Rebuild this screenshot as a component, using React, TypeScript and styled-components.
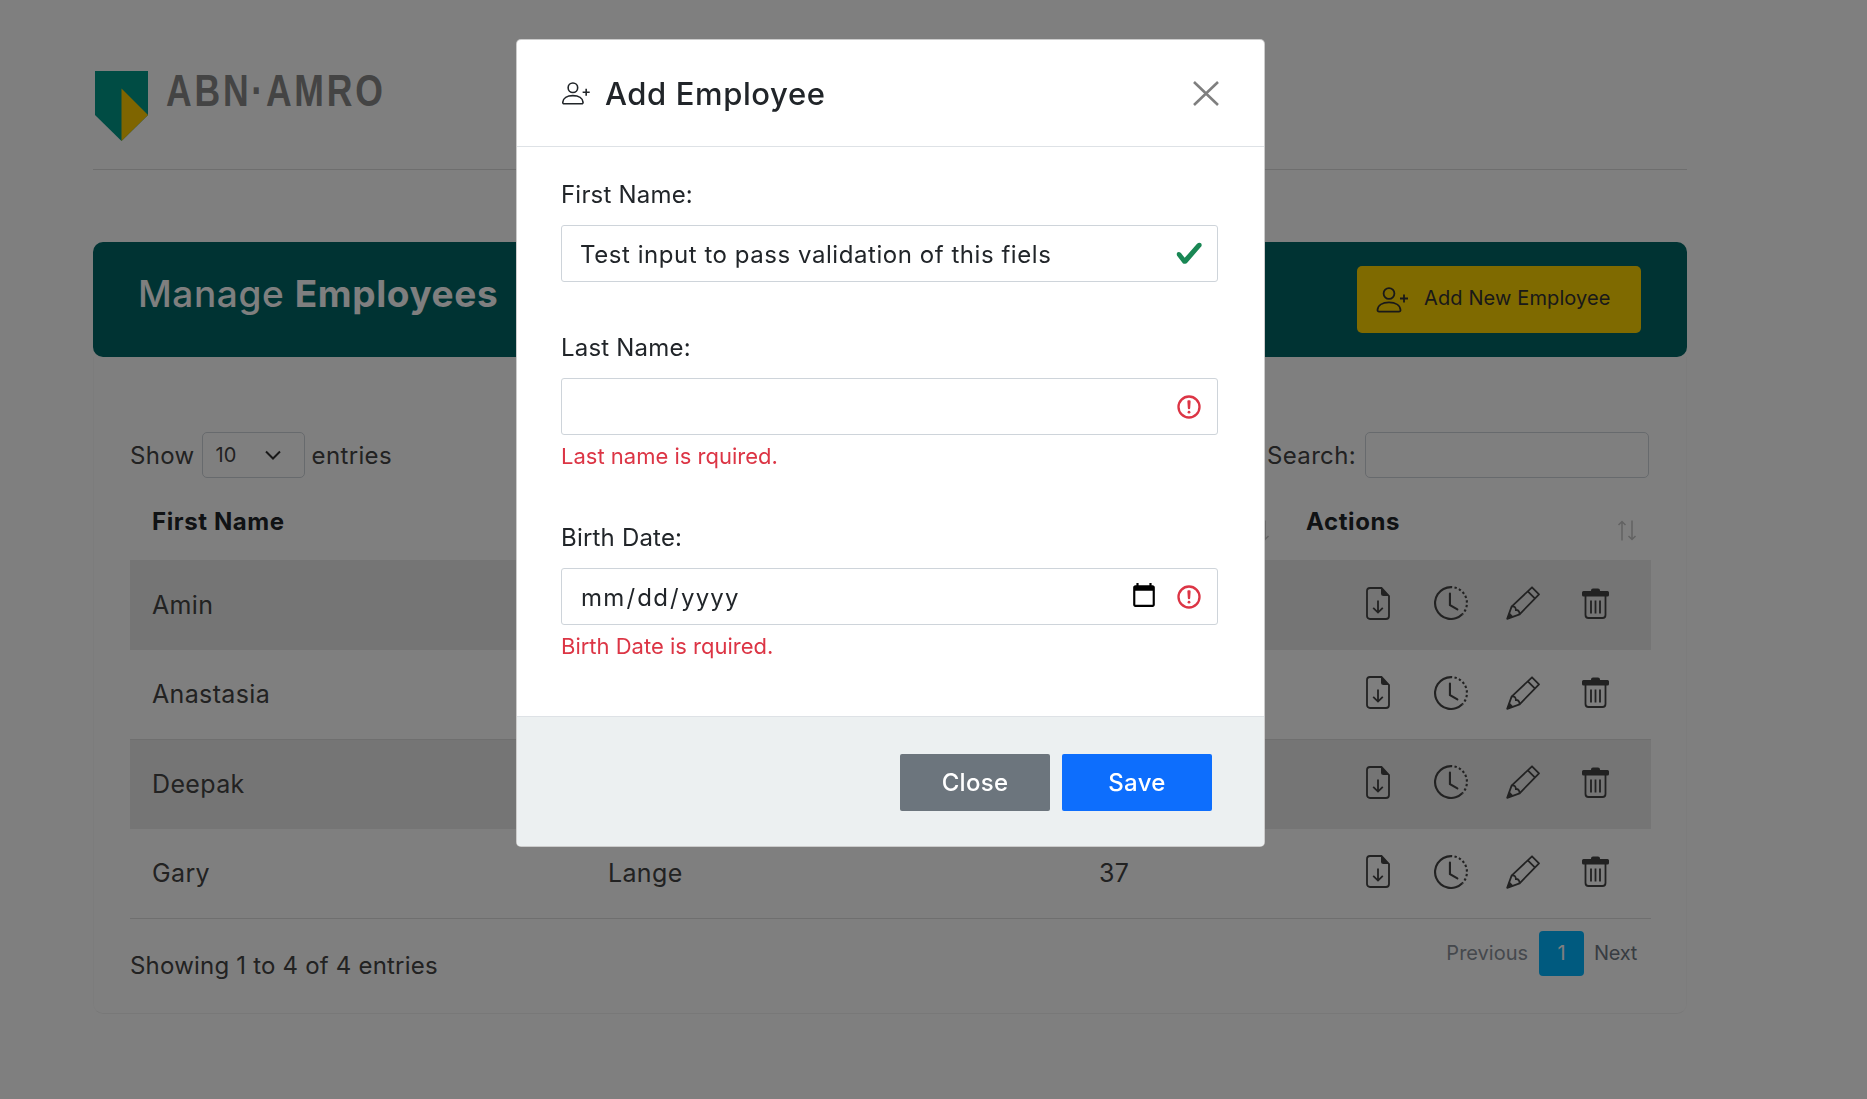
import React from "react";
import styled, { createGlobalStyle } from "styled-components";
import { BsClockHistory } from "react-icons/bs";

const GlobalStyle = createGlobalStyle`
  html, body {
    margin: 0;
    padding: 0;
    background: #fff;
  }
  body {
    font-family: Inter, "Open Sans", sans-serif;
    color: #212529;
  }
  * {
    box-sizing: border-box;
  }
`;

const PersonAddIcon: React.FC<{ width: number; height: number }> = ({ width, height }) => (
  <svg width={width} height={height} viewBox="0 0 33 26" fill="none" stroke="currentColor" strokeWidth="1.8">
    <circle cx="13" cy="6.5" r="5.4" />
    <path d="M3 24.6h20a1.5 1.5 0 0 0 1.5-1.6c-.3-4.800-5-7.600-11.500-7.600S1.800 18.200 1.500 23A1.500 1.500 0 0 0 3 24.600z" />
    <path d="M28 7.500v8M24 11.500h8" />
  </svg>
);

const FileDownIcon = () => (
  <svg width="24" height="33" viewBox="0 0 24 33" fill="none" stroke="currentColor" strokeWidth="1.8">
    <path d="M4 1h11.500L23 9v20a3 3 0 0 1-3 3H4a3 3 0 0 1-3-3V4a3 3 0 0 1 3-3z" />
    <path d="M15 1l8 8h-5.500A2.500 2.500 0 0 1 15 6.500z" fill="currentColor" stroke="none" />
    <path d="M12 13.500v12M7.200 20.800l4.800 4.800 4.800-4.800" />
  </svg>
);

const PencilIcon = () => (
  <svg width="34" height="34" viewBox="0 0 34 34" fill="none" stroke="currentColor" strokeWidth="1.8">
    <path d="M1.200 32.800L5.600 20.600 26 1.300l7 7L13.600 28.300z" strokeLinejoin="round" />
    <path d="M21.800 5.400l7 7" />
    <path d="M5.600 20.600c3-.6 4.200 1 4.300 3.400 2.400-.2 3.800 1.600 3.700 4.300" />
    <path d="M1.200 32.800l2-6.500 4.300 4.400z" fill="currentColor" stroke="none" />
  </svg>
);

const TrashIcon = () => (
  <svg width="27" height="31" viewBox="0 0 27 31" fill="none" stroke="currentColor" strokeWidth="1.800">
    <path d="M9 2.500a2 2 0 0 1 2-2h5a2 2 0 0 1 2 2V3h7.500a1.500 1.500 0 0 1 1.500 1.500v2.500a1.500 1.500 0 0 1-1.500 1.500h-24A1.500 1.500 0 0 1 0 7V4.500A1.500 1.500 0 0 1 1.500 3H9z" fill="currentColor" stroke="none" />
    <path d="M3.500 8v19a3 3 0 0 0 3 3h14a3 3 0 0 0 3-3V8" />
    <path d="M9 12.500v13M13.500 12.500v13M18 12.500v13" />
  </svg>
);

const InvalidIcon = () => (
  <svg width="28" height="28" viewBox="0 0 12 12" fill="none" stroke="#dc3545">
    <circle cx="6" cy="6" r="4.500" />
    <path strokeLinejoin="round" d="M5.800 3.600h.4L6 6.500z" />
    <circle cx="6" cy="8.200" r=".6" fill="#dc3545" stroke="none" />
  </svg>
);

const ValidIcon = () => (
  <svg width="28" height="28" viewBox="0 0 8 8">
    <path fill="#198754" d="M2.300 6.730L.6 4.530c-.4-1.040.46-1.400 1.100-.8l1.060 1.370L6.300 1.100c.6-.63 1.600-.27 1.250.7l-4 4.600c-.43.5-.8.4-1.250.33z" />
  </svg>
);

const SortArrows = () => (
  <svg width="20" height="21" viewBox="0 0 20 21" fill="none" stroke="currentColor" strokeWidth="1.500">
    <path d="M5 20.500V1.500M1.500 5L5 1.500 8.500 5" />
    <path d="M15 .5v19M11.500 16l3.500 3.500 3.500-3.500" />
  </svg>
);

const CloseIcon = () => (
  <svg width="26" height="25" viewBox="0 0 26 25" fill="none" stroke="currentColor" strokeWidth="2.600">
    <path d="M1 1l24 23M25 1L1 24" />
  </svg>
);

const ChevronIcon = () => (
  <svg width="18" height="10" viewBox="0 0 18 10" fill="none" stroke="currentColor" strokeWidth="2">
    <path d="M2 1.500l7 7 7-7" />
  </svg>
);

const App: React.FC = () => {
  const rows = [
    { first: "Amin", last: "", age: "" },
    { first: "Anastasia", last: "", age: "" },
    { first: "Deepak", last: "", age: "" },
    { first: "Gary", last: "Lange", age: "37" },
  ];

  return (
    <>
      <GlobalStyle />
      <Page>
        <TopBar>
          <svg width="53" height="70" viewBox="0 0 53 70">
            <path d="M0 0H53V44L26.500 70 0 44z" fill="#009888" />
            <path d="M26.500 17.500L53 44 26.500 70z" fill="#ffca00" />
          </svg>
          <LogoText>ABN·AMRO</LogoText>
        </TopBar>

        <Banner>
          <BannerTitle>
            Manage <b>Employees</b>
          </BannerTitle>
          <AddButton type="button">
            <PersonAddIcon width={33} height={26} />
            <AddLabel>Add New Employee</AddLabel>
          </AddButton>
        </Banner>

        <Panel>
          <Controls>
            <ControlGroup>
              Show
              <SelectWrap>
                <EntriesSelect defaultValue="10">
                  <option>10</option>
                  <option>25</option>
                  <option>50</option>
                </EntriesSelect>
                <SelectChevron>
                  <ChevronIcon />
                </SelectChevron>
              </SelectWrap>
              entries
            </ControlGroup>
            <ControlGroup>
              Search:
              <SearchInput type="text" />
            </ControlGroup>
          </Controls>

          <Table>
            <colgroup>
              <col style={{ width: 456 }} />
              <col style={{ width: 491 }} />
              <col style={{ width: 207 }} />
              <col style={{ width: 367 }} />
            </colgroup>
            <thead>
              <tr>
                <HeadCell>First Name</HeadCell>
                <HeadCell>Last Name</HeadCell>
                <HeadCell>
                  Age
                  <SortMark>
                    <SortArrows />
                  </SortMark>
                </HeadCell>
                <HeadCell>
                  Actions
                  <SortMark>
                    <SortArrows />
                  </SortMark>
                </HeadCell>
              </tr>
            </thead>
            <tbody>
              {rows.map((row, i) => (
                <Row key={row.first} striped={i % 2 === 0}>
                  <Cell>{row.first}</Cell>
                  <Cell>{row.last}</Cell>
                  <Cell>{row.age}</Cell>
                  <Cell>
                    <Actions>
                      <ActionSlot><FileDownIcon /></ActionSlot>
                      <ActionSlot><BsClockHistory size={34} /></ActionSlot>
                      <ActionSlot><PencilIcon /></ActionSlot>
                      <ActionSlot><TrashIcon /></ActionSlot>
                    </Actions>
                  </Cell>
                </Row>
              ))}
            </tbody>
          </Table>

          <TableFooter>
            <Showing>Showing 1 to 4 of 4 entries</Showing>
            <Pagination>
              <PageLink muted>Previous</PageLink>
              <CurrentPage>1</CurrentPage>
              <NextLink>Next</NextLink>
            </Pagination>
          </TableFooter>
        </Panel>
      </Page>

      <Overlay>
        <Modal>
          <ModalHeader>
            <ModalTitle>
              <PersonAddIcon width={30} height={23} />
              Add Employee
            </ModalTitle>
            <CloseButton type="button" aria-label="Close">
              <CloseIcon />
            </CloseButton>
          </ModalHeader>

          <ModalBody>
            <Field>
              <Label>First Name:</Label>
              <InputWrap>
                <TextInput type="text" defaultValue="Test input to pass validation of this fiels" />
                <FeedbackIcon><ValidIcon /></FeedbackIcon>
              </InputWrap>
            </Field>
            <Field>
              <Label>Last Name:</Label>
              <InputWrap>
                <TextInput type="text" />
                <FeedbackIcon><InvalidIcon /></FeedbackIcon>
              </InputWrap>
              <ErrorText>Last name is rquired.</ErrorText>
            </Field>
            <Field>
              <Label>Birth Date:</Label>
              <InputWrap>
                <DateInput type="date" />
                <FeedbackIcon><InvalidIcon /></FeedbackIcon>
              </InputWrap>
              <ErrorText>Birth Date is rquired.</ErrorText>
            </Field>
          </ModalBody>

          <ModalFooter>
            <FooterButton type="button" tone="#6c757d">Close</FooterButton>
            <FooterButton type="button" tone="#0d6efd">Save</FooterButton>
          </ModalFooter>
        </Modal>
      </Overlay>
    </>
  );
};

const Page = styled.div`
  width: 1867px;
  height: 1099px;
  padding: 71px 180px 0 93px;
  overflow: hidden;
`;

const TopBar = styled.header`
  display: flex;
  align-items: flex-start;
  gap: 18px;
  height: 99px;
  padding-left: 2px;
  border-bottom: 1px solid #ddd;
`;

const LogoText = styled.span`
  display: inline-block;
  transform: scaleX(0.79);
  transform-origin: left center;
  font-family: "Liberation Sans", sans-serif;
  font-weight: 700;
  font-size: 45px;
  line-height: 40px;
  letter-spacing: 3.5px;
  color: #888;
`;

const Banner = styled.section`
  display: flex;
  align-items: center;
  justify-content: space-between;
  height: 115px;
  margin-top: 72px;
  padding: 0 46px 0 45px;
  background: #006666;
  border-radius: 10px;
`;

const BannerTitle = styled.h2`
  margin: 0 0 12px;
  font-size: 37px;
  font-weight: 500;
  letter-spacing: 0.6px;
  color: #fff;

  b {
    font-weight: 700;
  }
`;

const AddButton = styled.button`
  display: flex;
  align-items: center;
  gap: 15px;
  width: 284px;
  height: 67px;
  padding: 0 0 0 19px;
  border: 0;
  border-radius: 5px;
  background: #ffd400;
  color: #333;
  font: 400 20px Inter, sans-serif;
  letter-spacing: 0.12px;
  white-space: nowrap;
`;

const AddLabel = styled.span`
  margin-bottom: 3px;
`;

const Panel = styled.section`
  height: 657px;
  padding: 75px 35px 0 36px;
  border: 1px solid rgba(0, 0, 0, 0.025);
  border-top: 0;
  border-bottom-color: rgba(0, 0, 0, 0.06);
  border-radius: 0 0 10px 10px;
`;

const Controls = styled.div`
  display: flex;
  align-items: center;
  justify-content: space-between;
  height: 46px;
  padding-right: 2px;
`;

const ControlGroup = styled.label`
  display: flex;
  align-items: center;
  gap: 7px;
  font-size: 24px;
  letter-spacing: 0.35px;
  color: #444;
`;

const SelectWrap = styled.span`
  position: relative;
  display: block;
  width: 103px;
  height: 46px;
`;

const EntriesSelect = styled.select`
  width: 100%;
  height: 100%;
  padding: 0 0 0 13px;
  appearance: none;
  background: transparent;
  border: 1px solid #ced4da;
  border-radius: 5px;
  color: #444;
  font: 400 20px Inter, sans-serif;
`;

const SelectChevron = styled.span`
  position: absolute;
  top: 18px;
  right: 23px;
  display: flex;
  color: #333;
  pointer-events: none;
`;

const SearchInput = styled.input`
  width: 284px;
  height: 46px;
  margin-left: 2px;
  border: 1px solid #ced4da;
  border-radius: 5px;
  background: transparent;
`;

const Table = styled.table`
  width: 100%;
  table-layout: fixed;
  border-collapse: collapse;
`;

const HeadCell = styled.th`
  position: relative;
  height: 82px;
  padding: 4px 0 0 22px;
  text-align: left;
  font-size: 24px;
  font-weight: 700;
  letter-spacing: 0.6px;
  color: #212529;
`;

const SortMark = styled.span`
  position: absolute;
  right: 14px;
  top: 40px;
  color: #c4c4c4;
`;

const Row = styled.tr<{ striped: boolean }>`
  height: 89.5px;
  background: ${(props) => (props.striped ? "#ebebeb" : "transparent")};
  border-bottom: 1px solid ${(props) => (props.striped ? "transparent" : "#dedede")};
`;

const Cell = styled.td`
  padding: 0 0 0 22px;
  font-size: 25px;
  letter-spacing: 0.35px;
  color: #444;
`;

const Actions = styled.div`
  display: flex;
  align-items: center;
  margin: 0 0 3px 36px;
  color: #444;
`;

const ActionSlot = styled.span`
  display: flex;
  align-items: center;
  justify-content: center;
  width: 72.5px;
`;

const TableFooter = styled.div`
  display: flex;
  justify-content: space-between;
  align-items: flex-start;
  margin-top: 12px;
`;

const Showing = styled.div`
  margin-top: 20px;
  font-size: 24px;
  letter-spacing: 0.2px;
  color: #444;
`;

const Pagination = styled.nav`
  display: flex;
  align-items: center;
  gap: 11px;
  padding-right: 14px;
`;

const PageLink = styled.span<{ muted?: boolean }>`
  font-size: 20px;
  color: ${(props) => (props.muted ? "#8a919a" : "#707984")};
`;

const NextLink = styled(PageLink)`
  margin-left: -1px;
  letter-spacing: -0.3px;
`;

const CurrentPage = styled.span`
  display: flex;
  align-items: center;
  justify-content: center;
  width: 45px;
  height: 45px;
  border-radius: 4px;
  background: #00b4ff;
  color: #fff;
  font-size: 20px;
`;

const Overlay = styled.div`
  position: fixed;
  inset: 0;
  display: flex;
  align-items: flex-start;
  padding: 39px 0 0 516px;
  background: rgba(0, 0, 0, 0.5);
`;

const Modal = styled.div`
  width: 749px;
  height: 808px;
  display: flex;
  flex-direction: column;
  background: #fff;
  border: 1px solid rgba(0, 0, 0, 0.2);
  border-radius: 5px;
  overflow: hidden;
`;

const ModalHeader = styled.div`
  display: flex;
  align-items: center;
  justify-content: space-between;
  height: 107px;
  padding: 0 45px 0 44px;
  border-bottom: 1px solid #dee2e6;
`;

const ModalTitle = styled.h5`
  display: flex;
  align-items: center;
  gap: 14px;
  margin: 0;
  font-size: 31px;
  font-weight: 500;
  letter-spacing: 0.6px;
  color: #212529;
`;

const CloseButton = styled.button`
  display: flex;
  padding: 0;
  border: 0;
  background: none;
  color: #7f7f7f;
`;

const ModalBody = styled.div`
  flex: 1;
  display: flex;
  flex-direction: column;
  gap: 47px;
  padding: 29px 46px 0 44px;
`;

const Field = styled.div``;

const Label = styled.label`
  display: block;
  margin-bottom: 13px;
  padding-top: 1px;
  height: 36px;
  font-size: 24px;
  line-height: 36px;
  letter-spacing: 0.2px;
  color: #212529;
`;

const InputWrap = styled.div`
  position: relative;
`;

const TextInput = styled.input`
  display: block;
  width: 100%;
  height: 57px;
  padding: 1px 60px 0 18px;
  border: 1px solid #ced4da;
  border-radius: 3px;
  color: #212529;
  font: 400 24px Inter, sans-serif;
  letter-spacing: 0.55px;
`;

const DateInput = styled(TextInput)`
  padding-right: 59px;
  letter-spacing: 1.2px;

  &::-webkit-calendar-picker-indicator {
    margin: 0;
    padding: 0;
    width: 28px;
    height: 30px;
  }
`;

const FeedbackIcon = styled.span`
  position: absolute;
  top: 15px;
  right: 15px;
  display: flex;
  pointer-events: none;
`;

const ErrorText = styled.div`
  margin-top: 5px;
  font-size: 22px;
  line-height: 32px;
  color: #dc3545;
`;

const ModalFooter = styled.div`
  display: flex;
  justify-content: flex-end;
  gap: 12px;
  height: 130px;
  padding: 37px 52px 0 0;
  background: #ecf0f1;
  border-top: 1px solid #dee2e6;
`;

const FooterButton = styled.button<{ tone: string }>`
  width: 150px;
  height: 57px;
  border: 0;
  border-radius: 2px;
  background: ${(props) => props.tone};
  color: #fff;
  font: 500 24px Inter, sans-serif;
  letter-spacing: 0.3px;
`;

export default App;
